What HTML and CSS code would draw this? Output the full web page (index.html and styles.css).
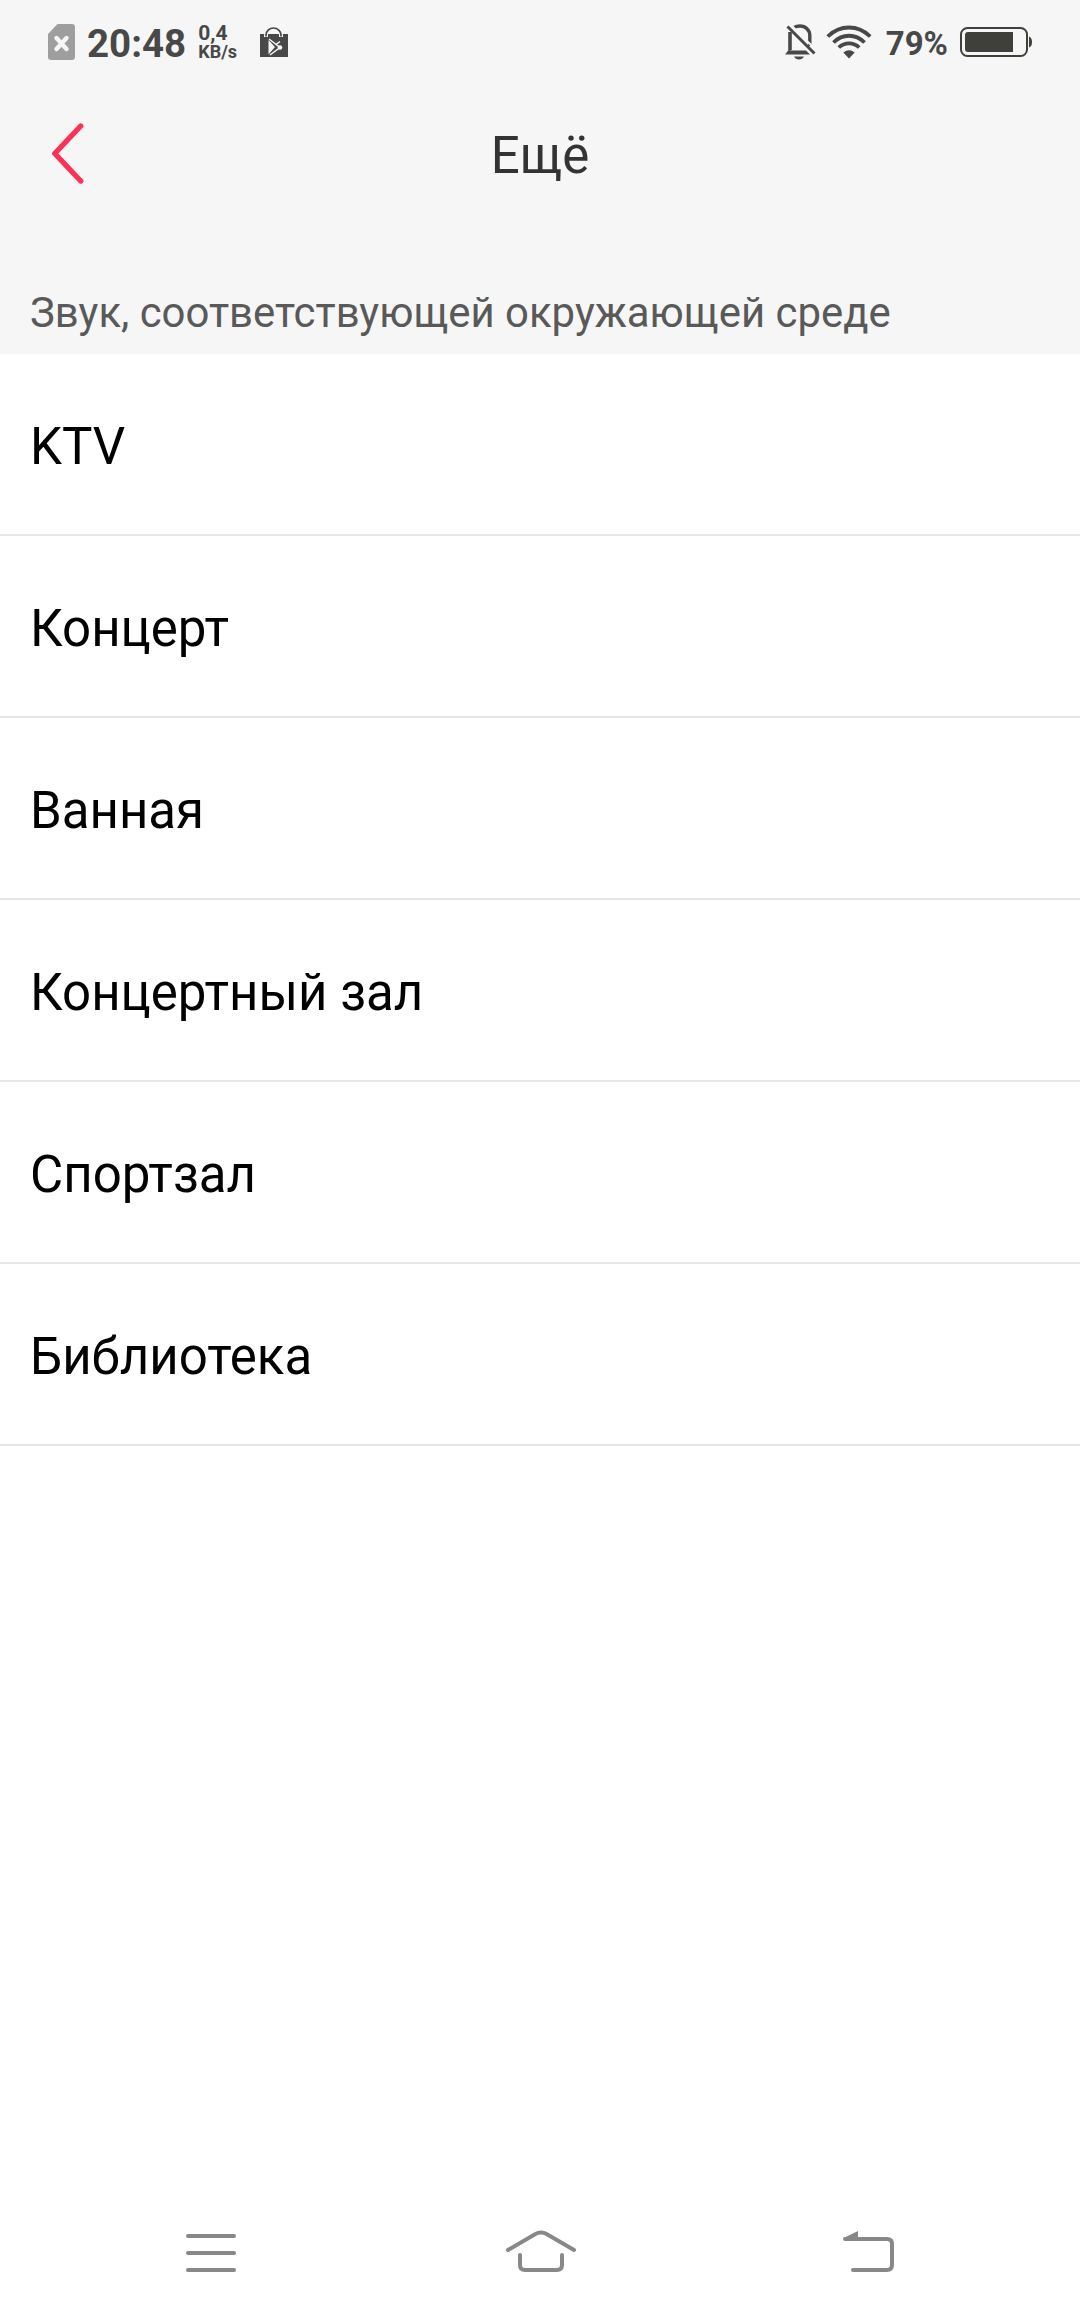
FILE: index.html
```html
<!DOCTYPE html>
<html lang="ru">
<head>
  <meta charset="UTF-8">
  <title>Ещё</title>
  <link rel="stylesheet" href="styles.css">
</head>
<body>

  <div class="top">
    <div class="status-bar">
      <svg class="sim" width="28" height="36" viewBox="0 0 28 36">
        <path d="M9.500 0H24a3 3 0 0 1 3 3V33a3 3 0 0 1-3 3H3a3 3 0 0 1-3-3V10Z" fill="#9e9e9e"/>
        <path d="M8.500 14L18.500 25M18.500 14L8.500 25" stroke="#f6f6f6" stroke-width="4.400" stroke-linecap="round"/>
      </svg>
      <span class="time">20:48</span>
      <div class="speed">
        <span class="speed-value">0,4</span>
        <span class="speed-unit">KB/s</span>
      </div>
      <svg class="bag" width="28" height="30" viewBox="0 0 28 30">
        <path d="M0 7H28V30H0Z" fill="#484848"/>
        <path d="M6 10V8a7.500 7 0 0 1 15 0V10" fill="none" stroke="#f6f6f6" stroke-width="4"/>
        <path d="M6 9.500V8a7.500 7 0 0 1 15 0V9.500" fill="none" stroke="#484848" stroke-width="1.700"/>
        <path d="M8.500 13V27.500L15 20Z" fill="#f6f6f6"/>
        <path d="M9 12L20 20.500L10 28" fill="none" stroke="#f6f6f6" stroke-width="1.500"/>
        <path d="M16 17.500L20 14.500" stroke="#f6f6f6" stroke-width="1.500"/>
        <circle cx="20" cy="20.500" r="2.300" fill="#f6f6f6"/>
      </svg>

      <div class="status-right">
        <svg class="bell" width="31" height="36" viewBox="0 0 31 36">
          <path d="M9 3.500C11 2.300 13 2 15 2C20.500 2 24.800 6 24.800 11.500V22" fill="none" stroke="#484848" stroke-width="3.400"/>
          <path d="M5 8V26" stroke="#484848" stroke-width="3.600"/>
          <path d="M4 25.500L0 30.500H25L21 26.500H6Z" fill="#484848"/>
          <path d="M5.500 .5L30.500 25.500" stroke="#f6f6f6" stroke-width="2"/>
          <path d="M2.500 2.500L29.500 29.500" stroke="#484848" stroke-width="3"/>
          <path d="M9 32.500H19Q17.500 35.500 14 35.500T9 32.500Z" fill="#484848"/>
        </svg>
        <svg class="wifi" width="46" height="34" viewBox="0 0 46 34">
          <g fill="none" stroke="#484848" stroke-width="3.800">
            <path d="M1.800 11.500C14 -.5 32 -.5 44.200 11.500"/>
            <path d="M7.500 17.500C16.500 8.500 29.500 8.500 38.500 17.500"/>
            <path d="M12.800 22.500C18.500 17 27.500 17 33.200 22.500"/>
          </g>
          <path d="M23 33.500L17.300 27.500Q23 23 28.700 27.500Z" fill="#484848"/>
        </svg>
        <span class="percent">79%</span>
        <svg class="battery" width="72" height="30" viewBox="0 0 72 30">
          <rect x="1" y="1" width="66" height="28" rx="6.500" fill="none" stroke="#3f4039" stroke-width="2"/>
          <path d="M8 5H53V25H8a3 3 0 0 1-3-3V8a3 3 0 0 1 3-3Z" fill="#3f4039"/>
          <path d="M69 9.500Q72 10.500 72 15T69 20.500Z" fill="#3f4039"/>
        </svg>
      </div>
    </div>

    <div class="header">
      <svg class="back" width="34" height="62" viewBox="0 0 34 62">
        <path d="M30.700 4L4.800 31.500L30.700 59" fill="none" stroke="#fc3158" stroke-width="5.400" stroke-linecap="round" stroke-linejoin="round"/>
      </svg>
      <h1 class="title">Ещё</h1>
    </div>

    <p class="section-name">Звук, соответствующей окружающей среде</p>
  </div>

  <ul class="list">
    <li class="item">KTV</li>
    <li class="item">Концерт</li>
    <li class="item">Ванная</li>
    <li class="item">Концертный зал</li>
    <li class="item">Спортзал</li>
    <li class="item">Библиотека</li>
  </ul>

  <div class="nav">
    <svg width="50" height="42" viewBox="0 0 50 42">
      <path d="M2 6H48M2 23H48M2 40H48" stroke="#888" stroke-width="4" stroke-linecap="round"/>
    </svg>
    <svg class="home" width="70" height="44" viewBox="0 0 70 44">
      <path d="M2 22L29 6.200Q35 3 41 6.200L68 22M14 27V37Q14 42 19 42H51Q56 42 56 37V27" fill="none" stroke="#888" stroke-width="4" stroke-linecap="round"/>
    </svg>
    <svg width="51" height="42" viewBox="0 0 51 42">
      <path d="M2 9H44Q49 9 49 14V35Q49 40 44 40H10" fill="none" stroke="#888" stroke-width="4" stroke-linecap="round"/>
      <path d="M.500 8L15 1V10H2Z" fill="#888"/>
    </svg>
  </div>

</body>
</html>
```
FILE: styles.css
```css
* {
  box-sizing: border-box;
}

body {
  margin: 0;
  height: 2316px;
  display: flex;
  flex-direction: column;
  font-family: Roboto, sans-serif;
  background-color: #fff;
  color: #000;
}

svg {
  display: block;
  flex: none;
}

.top {
  height: 354px;
  background-color: #f6f6f6;
}

.status-bar {
  display: flex;
  align-items: center;
  height: 84px;
  padding: 0 48px;
  color: #484848;
  font-weight: 700;
}

.time {
  margin-left: 11px;
  font-size: 38.500px;
  line-height: 46px;
  padding-top: 3px;
}

.speed {
  display: flex;
  flex-direction: column;
  margin-left: 12px;
  width: 42px;
}

.speed-value {
  font-size: 21px;
  line-height: 20px;
}

.speed-unit {
  font-size: 18px;
  line-height: 18px;
}

.bag {
  margin-left: 20px;
}

.status-right {
  display: flex;
  align-items: center;
  margin-left: auto;
}

.wifi {
  margin-left: 10px;
}

.percent {
  margin-left: 14px;
  font-size: 33px;
  line-height: 40px;
  padding-top: 3px;
}

.battery {
  margin-left: 12px;
}

.header {
  display: flex;
  align-items: center;
  height: 138px;
  padding: 0 50px;
}

.title {
  flex: 1;
  margin: 4px 34px 0 0;
  text-align: center;
  font-size: 51px;
  font-weight: 400;
  color: #333;
}

.section-name {
  margin: 66px 0 0 30px;
  font-size: 41.900px;
  line-height: 50px;
  color: #595959;
}

.list {
  margin: 0;
  padding: 0;
  list-style: none;
}

.item {
  height: 182px;
  padding: 3px 30px 0;
  font-size: 51px;
  line-height: 180px;
  border-bottom: 2px solid #e6e6e6;
}

.nav {
  display: flex;
  justify-content: space-between;
  align-items: flex-end;
  height: 126px;
  margin-top: auto;
  padding: 0 186px 44px;
}

.home {
  margin-left: 2px;
}
```
